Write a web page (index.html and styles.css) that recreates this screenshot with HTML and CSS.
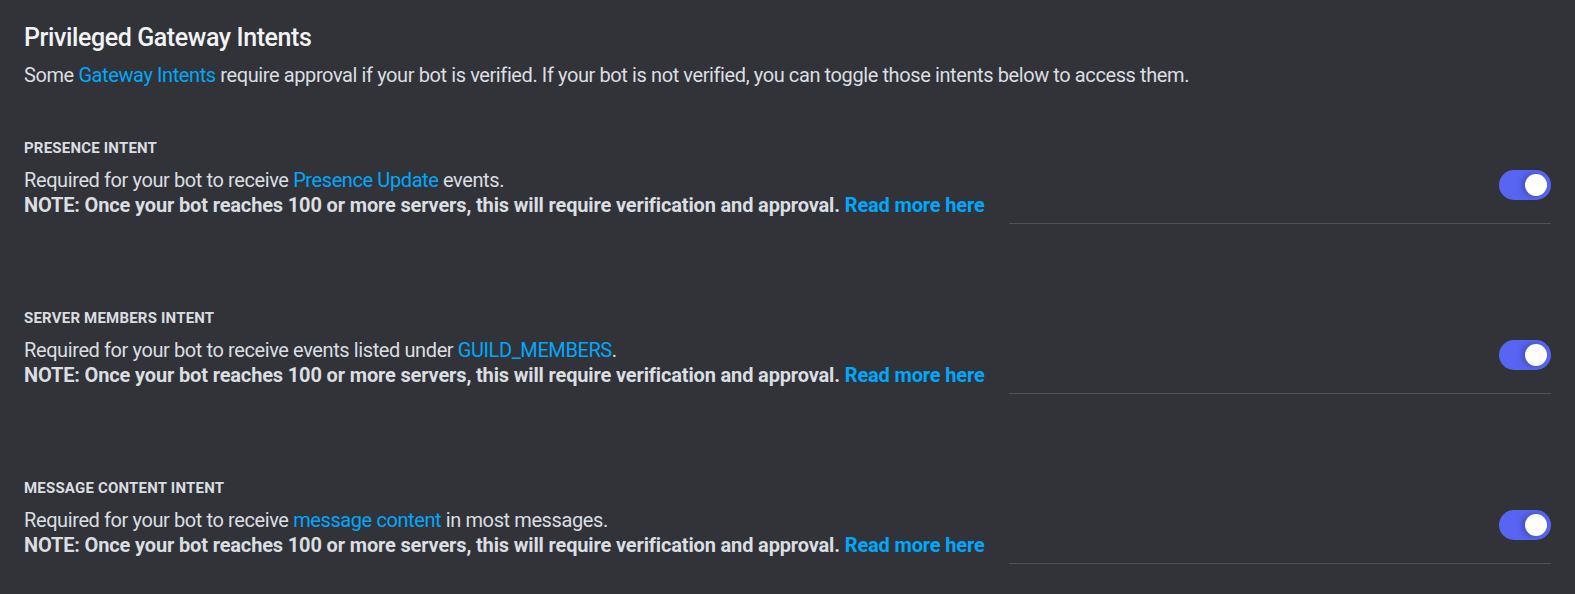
FILE: index.html
```html
<!DOCTYPE html>
<html>
<head>
<meta charset="utf-8">
<link rel="stylesheet" href="styles.css">
</head>
<body>
<div class="page">
  <h2 class="title">Privileged Gateway Intents</h2>
  <p class="intro">Some <a class="link">Gateway Intents</a> require approval if your bot is verified. If your bot is not verified, you can toggle those intents below to access them.</p>

  <section class="intent">
    <h3 class="intent-name">PRESENCE INTENT</h3>
    <div class="intent-body">
      <div class="intent-text">
        <div class="desc">Required for your bot to receive <a class="link">Presence Update</a> events.</div>
        <div class="note">NOTE: Once your bot reaches 100 or more servers, this will require verification and approval. <a class="link">Read more here</a></div>
      </div>
      <div class="intent-control">
        <div class="toggle"><span class="knob"></span></div>
      </div>
    </div>
  </section>

  <section class="intent">
    <h3 class="intent-name">SERVER MEMBERS INTENT</h3>
    <div class="intent-body">
      <div class="intent-text">
        <div class="desc">Required for your bot to receive events listed under <a class="link">GUILD_MEMBERS</a>.</div>
        <div class="note">NOTE: Once your bot reaches 100 or more servers, this will require verification and approval. <a class="link">Read more here</a></div>
      </div>
      <div class="intent-control">
        <div class="toggle"><span class="knob"></span></div>
      </div>
    </div>
  </section>

  <section class="intent">
    <h3 class="intent-name">MESSAGE CONTENT INTENT</h3>
    <div class="intent-body">
      <div class="intent-text">
        <div class="desc">Required for your bot to receive <a class="link">message content</a> in most messages.</div>
        <div class="note">NOTE: Once your bot reaches 100 or more servers, this will require verification and approval. <a class="link">Read more here</a></div>
      </div>
      <div class="intent-control">
        <div class="toggle"><span class="knob"></span></div>
      </div>
    </div>
  </section>
</div>
</body>
</html>
```

FILE: styles.css
```css
html, body {
  margin: 0;
  padding: 0;
  background: #313338;
}
body {
  font-family: Roboto, "Noto Sans", sans-serif;
  color: #dbdee1;
}
.page {
  padding: 22px 24px 0 24px;
}
.title {
  margin: 0;
  font-size: 25px;
  line-height: 32px;
  font-weight: 500;
  letter-spacing: -0.4px;
  color: #f2f3f5;
}
.intro {
  margin: 9px 0 0 0;
  font-size: 20px;
  line-height: 25px;
  letter-spacing: -0.4px;
}
.link {
  color: #00a8fc;
  text-decoration: none;
}
.intent {
  margin-top: 50px;
}
.intent + .intent {
  margin-top: 84px;
}
.intent-name {
  margin: 0;
  font-size: 15px;
  line-height: 20px;
  font-weight: 700;
  letter-spacing: 0.2px;
  color: #dbdee1;
}
.intent-body {
  display: flex;
  gap: 28px;
  margin-top: 10px;
}
.intent-text {
  width: 957px;
  flex: none;
  font-size: 20px;
  line-height: 25px;
  white-space: nowrap;
  padding-bottom: 6px;
}
.desc {
  letter-spacing: -0.4px;
}
.note {
  font-weight: 700;
  letter-spacing: -0.15px;
}
.intent-control {
  flex: 1;
  display: flex;
  justify-content: flex-end;
  align-items: flex-start;
  padding-top: 2px;
  border-bottom: 1px solid #4e5058;
}
.toggle {
  width: 52px;
  height: 30px;
  border-radius: 15px;
  background: #5865f2;
  display: flex;
  align-items: center;
  justify-content: flex-end;
  padding: 0 4px;
  box-sizing: border-box;
}
.knob {
  width: 22px;
  height: 22px;
  border-radius: 50%;
  background: #ffffff;
  box-shadow: -3px 0 6px rgba(0, 0, 0, 0.25);
}
```
